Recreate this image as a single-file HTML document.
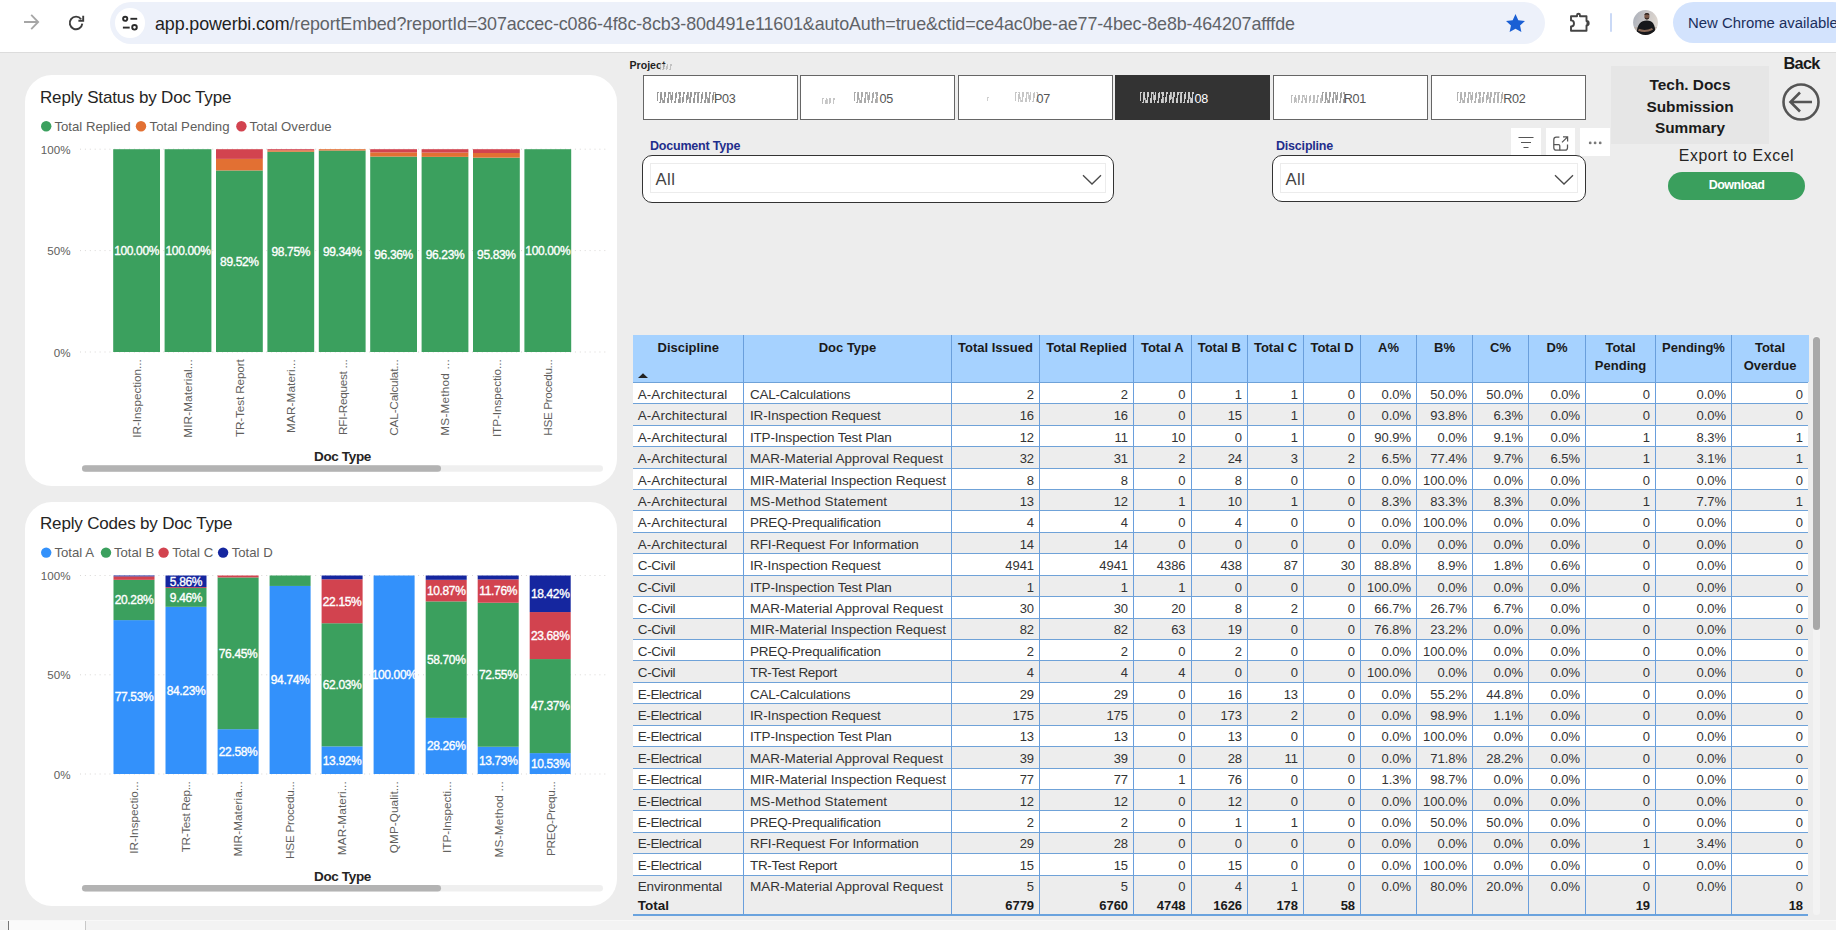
<!DOCTYPE html>
<html lang="en"><head><meta charset="utf-8"><title>Tech. Docs Submission Summary</title>
<style>
*{box-sizing:border-box;margin:0;padding:0}
html,body{width:1836px;height:930px;overflow:hidden}
body{position:relative;background:#ededed;font-family:"Liberation Sans",sans-serif;color:#252423}
.abs{position:absolute}
#toolbar{position:absolute;left:0;top:0;width:1836px;height:53px;background:#fff;border-bottom:1px solid #dcdcdc}
#url{position:absolute;left:109.5px;top:2px;width:1435px;height:42px;border-radius:21px;background:#edf1fa}
#url .site{position:absolute;left:5.5px;top:6px;width:29.6px;height:29.6px;border-radius:50%;background:#fff}
#url .t{position:absolute;left:45.5px;top:9.5px;font-size:17.9px;line-height:24px;color:#5f6368;white-space:nowrap;letter-spacing:-0.12px}
#url .t b{font-weight:400;color:#1f1f1f}
#pill{position:absolute;left:1673px;top:1.5px;width:180px;height:41.5px;border-radius:21px;background:#d3e3fd;color:#1b2f5c;font-size:14.9px;line-height:42px;padding-left:15px;white-space:nowrap}
.card{position:absolute;background:#fff;border-radius:27px}
.ctitle{position:absolute;font-size:17px;letter-spacing:-.17px;color:#252423;white-space:nowrap;line-height:20px}
.pbtn{position:absolute;top:75px;width:155px;height:45px;background:#fff;border:1px solid #666;font-size:12.6px;color:#555;white-space:nowrap}
.pbtn.sel{background:#333;border-color:#333;color:#fff}
.pbtn span{position:absolute;top:13.5px;line-height:18px;letter-spacing:-.3px}
.pbtn i{position:absolute;filter:blur(.7px);background:repeating-linear-gradient(97deg,#444 0 1.6px,transparent 1.6px 3.7px),repeating-linear-gradient(80deg,transparent 0 5px,#666 5px 6.3px,transparent 6.3px 8.9px)}
.pbtn.sel i{background:repeating-linear-gradient(97deg,#fff 0 1.6px,transparent 1.6px 3.7px),repeating-linear-gradient(80deg,transparent 0 5px,#ddd 5px 6.3px,transparent 6.3px 8.9px)}
.slab{position:absolute;font-weight:700;font-size:12.5px;letter-spacing:-.2px;color:#1f2e8c;white-space:nowrap;line-height:16px}
.dd{position:absolute;top:155px;background:#fff;border:1px solid #333;border-radius:10px}
.dd .in{position:absolute;left:7px;right:7px;top:7px;height:30px;border:1px solid #ececec}
.dd .all{position:absolute;left:12.5px;top:13.6px;font-size:16.7px;line-height:20px;color:#444;letter-spacing:.4px}
.ico{position:absolute;top:128px;height:28px;background:#fff}
#tds{position:absolute;left:1611px;top:66px;width:158px;height:78px;background:#e6e6e6;text-align:center;font-weight:700;font-size:15.4px;line-height:21.8px;color:#1a1a1a;padding-top:7.8px}
#back{position:absolute;left:1783.5px;top:53px;font-weight:700;font-size:16.3px;line-height:20px;color:#1a1a1a;letter-spacing:-.7px}
#exp{position:absolute;left:1660px;top:146px;width:153px;text-align:center;font-size:15.8px;line-height:20px;color:#252423;letter-spacing:.61px;white-space:nowrap}
#dl{position:absolute;left:1668px;top:172px;width:137px;height:28px;border-radius:14px;background:#3a9f5d;color:#fff;font-weight:700;font-size:12.5px;letter-spacing:-.5px;line-height:27px;text-align:center}
#bstrip{position:absolute;left:0;top:920px;width:1836px;height:10px;background:#f3f3f3;border-top:1px solid #f8f8f8}
/* table */
#tbl{position:absolute;left:0;top:0}
.hd{position:absolute;top:335px;height:47px;background:#a6d2ff;font-weight:700;font-size:13px;line-height:18px;text-align:center;color:#1a1a1a;padding-top:4px;white-space:nowrap}
.row{position:absolute;left:633px;width:1175px;font-size:13px;color:#333;white-space:nowrap;overflow:visible}
.row.o{background:#fff}
.row span{position:absolute;height:16px;line-height:16px;overflow:visible}
.row span.n{text-align:right}
.hl{position:absolute;left:633px;width:1175px;height:1px;background:#6fa2d8}
.vl{position:absolute;width:1px;background:#6a9fdc}
.s0{letter-spacing:0.076px}.s1{letter-spacing:-0.308px}.s2{letter-spacing:-0.388px}.s3{letter-spacing:-0.141px}.s4{letter-spacing:-0.246px}.s5{letter-spacing:-0.139px}.s6{letter-spacing:-0.190px}.s7{letter-spacing:0.006px}.s8{letter-spacing:-0.023px}.s9{letter-spacing:0.108px}.s10{letter-spacing:-0.203px}.s11{letter-spacing:-0.116px}.s12{letter-spacing:-0.325px}.row span{font-size:13.5px}.row span.n{font-size:13px}</style></head>
<body>
<div id="toolbar">
<svg class="abs" style="left:22px;top:12.2px" width="20" height="20" viewBox="0 0 20 20"><path d="M2 10H15.8M9.2 2.9L16.2 10L9.2 17.1" fill="none" stroke="#a6a6a6" stroke-width="1.8"/></svg>
<svg class="abs" style="left:66px;top:12.5px" width="20" height="20" viewBox="0 0 20 20"><g fill="none" stroke="#3c3c3c" stroke-width="1.9"><path d="M15.1 6.2A6.3 6.3 0 1 0 16.3 10.7"/><path d="M17.2 2.8V7.7H12.4"/></g></svg>
<div id="url"><div class="site"></div>
<svg class="abs" style="left:10.5px;top:12px" width="20" height="18" viewBox="0 0 20 18"><g fill="none" stroke="#2b2b2b" stroke-width="1.9"><circle cx="5.2" cy="4.8" r="2.1"/><path d="M10.4 4.8H17.2"/><circle cx="14.5" cy="13.3" r="2.3"/><path d="M2.9 13.6H9.7"/></g></svg>
<div class="t"><b>app.powerbi.com</b>/reportEmbed?reportId=307accec-c086-4f8c-8cb3-80d491e11601&amp;autoAuth=true&amp;ctid=ce4ac0be-ae77-4bec-8e8b-464207afffde</div>
<svg class="abs" style="left:1394.3px;top:9.8px" width="23" height="23" viewBox="0 0 24 24"><path d="M12 2.2l2.95 6.35 6.95.8-5.15 4.75 1.4 6.85L12 17.5l-6.15 3.45 1.4-6.85L2.1 9.35l6.95-.8z" fill="#1a5fd4"/></svg>
</div>
<svg class="abs" style="left:1567px;top:11px" width="24" height="24" viewBox="0 0 24 24"><path d="M4 5.3H10V4.2A1.5 1.5 0 0 1 13 4.2V5.3H19.5V10A2.2 2.2 0 0 1 19.5 14.4V19.8H4V15.4A3 3 0 0 0 4 9.4Z" fill="none" stroke="#444" stroke-width="1.9" stroke-linejoin="round"/><path d="M19.5 10A2.2 2.2 0 0 1 19.5 14.4Z" fill="#444"/></svg>
<div class="abs" style="left:1610.4px;top:13px;width:2px;height:19px;background:#cad9f6;border-radius:1px"></div>
<svg class="abs" style="left:1633px;top:9.9px" width="25" height="25" viewBox="0 0 25 25"><defs><clipPath id="av"><circle cx="12.5" cy="12.5" r="12.4"/></clipPath><linearGradient id="avg" x1="0" y1="0" x2="1" y2="0.3"><stop offset="0" stop-color="#a9afba"/><stop offset="0.55" stop-color="#c9c6c6"/><stop offset="1" stop-color="#ddd6cf"/></linearGradient></defs><g clip-path="url(#av)"><rect width="25" height="25" fill="url(#avg)"/><path d="M0 17H25V25H0Z" fill="#b8a99c" opacity=".7"/><path d="M3.5 26C3.5 14.5 7.5 10.6 13.8 10.6S22.5 14.5 22.5 26Z" fill="#17181b"/><ellipse cx="13.9" cy="6.2" rx="2.5" ry="3.2" fill="#7a5747"/><path d="M11.4 5.2C11.4 2.4 16.4 2.4 16.4 5.2C15.4 4.2 12.4 4.2 11.4 5.2Z" fill="#2a211d"/><path d="M11.6 7.2C12 10.2 15.8 10.2 16.2 7.2C15 8.6 12.8 8.6 11.6 7.2Z" fill="#2f2622"/><path d="M5.5 19.8Q12.5 22.6 19.5 18.8" stroke="#8b6a58" stroke-width="2.1" fill="none"/></g></svg>
<div id="pill">New Chrome available</div>
</div>
<div class="card" style="left:25px;top:75px;width:592px;height:410.5px"></div>
<div class="card" style="left:25px;top:502px;width:592px;height:404px"></div>
<div class="abs" style="left:629.5px;top:58.2px;font-weight:700;font-size:10.6px;line-height:14px;color:#222;white-space:nowrap">Project<span style="display:inline-block;width:13px;height:6px;margin-left:-5px;vertical-align:-1px;background:repeating-linear-gradient(100deg,#bbb 0 1.5px,#eee 1.5px 3.4px);filter:blur(.7px);opacity:.85"></span></div>
<div class="ico" style="left:1511px;width:30px"><svg width="30" height="28" viewBox="0 0 30 28"><path d="M7.5 9.5H22.5M10 14.5H20M12.5 19.5H17.5" stroke="#555" stroke-width="1.2" fill="none"/></svg></div>
<div class="ico" style="left:1546px;width:29px"><svg width="29" height="28" viewBox="0 0 29 28"><g fill="none" stroke="#555" stroke-width="1.25"><path d="M13.4 9.2H10.3A2.5 2.5 0 0 0 7.8 11.7V19.7A2.5 2.5 0 0 0 10.3 22.2H19A2.5 2.5 0 0 0 21.5 19.7V16.5"/><path d="M17 8.9H21.6V13.4M21.6 8.9L16 14.4"/><path d="M7.8 16.5H12.6A1.2 1.2 0 0 1 13.8 17.7V22.2"/></g></svg></div>
<div class="ico" style="left:1580px;width:30px"><svg width="30" height="28" viewBox="0 0 30 28"><g fill="#7a7a7a"><circle cx="10.2" cy="14.9" r="1.4"/><circle cx="15.1" cy="14.9" r="1.4"/><circle cx="20.2" cy="14.9" r="1.4"/></g></svg></div>
<div class="pbtn" style="left:643px"><i style="left:13.0px;top:16px;width:59px;height:11px;opacity:0.55"></i><span style="right:61.6px">P03</span></div>
<div class="pbtn" style="left:800px"><i style="left:21.0px;top:22px;width:13px;height:6px;opacity:0.3"></i><i style="left:53.0px;top:16px;width:25px;height:11px;opacity:0.45"></i><span style="right:61.0px">05</span></div>
<div class="pbtn" style="left:958px"><i style="left:28.0px;top:21px;width:2px;height:4px;opacity:0.25"></i><i style="left:56.0px;top:16px;width:23px;height:10px;opacity:0.3"></i><span style="right:62.0px">07</span></div>
<div class="pbtn sel" style="left:1115px"><i style="left:24.0px;top:16px;width:54px;height:11px;opacity:0.75"></i><span style="right:61.0px">08</span></div>
<div class="pbtn" style="left:1273px"><i style="left:17.0px;top:19px;width:31px;height:8px;opacity:0.35"></i><i style="left:48.0px;top:16px;width:23px;height:11px;opacity:0.5"></i><span style="right:61.0px">R01</span></div>
<div class="pbtn" style="left:1430.5px"><i style="left:25.5px;top:16px;width:47px;height:11px;opacity:0.4"></i><span style="right:59.1px">R02</span></div>
<div class="slab" style="left:650px;top:138px">Document Type</div>
<div class="slab" style="left:1276px;top:138px">Discipline</div>
<div class="dd" style="left:642px;width:472px;height:48px"><div class="in"></div><div class="all">All</div><svg class="abs" style="right:11px;top:18px" width="20" height="12" viewBox="0 0 20 12"><path d="M1 1.2L10 10L19 1.2" fill="none" stroke="#4a4a4a" stroke-width="1.3"/></svg></div>
<div class="dd" style="left:1272px;width:314px;height:46.5px"><div class="in"></div><div class="all">All</div><svg class="abs" style="right:11px;top:18px" width="20" height="12" viewBox="0 0 20 12"><path d="M1 1.2L10 10L19 1.2" fill="none" stroke="#4a4a4a" stroke-width="1.3"/></svg></div>
<div id="tds">Tech. Docs<br>Submission<br>Summary</div>
<div id="back">Back</div>
<svg class="abs" style="left:1781px;top:82px" width="40" height="40" viewBox="0 0 40 40"><g fill="none" stroke="#555" stroke-width="2.6"><circle cx="20" cy="20" r="17.5"/><path d="M31 20H10M19 10.5L9.5 20L19 29.5" stroke-linejoin="miter"/></g></svg>
<div id="exp">Export to Excel</div>
<div id="dl">Download</div>
<div class="ctitle" style="left:40px;top:88px">Reply Status by Doc Type</div><svg class="abs" style="left:0;top:0" width="630" height="930" viewBox="0 0 630 930" font-family="Liberation Sans, sans-serif"><circle cx="46.2" cy="126.3" r="5.2" fill="#3ba05e"/><text x="54.4" y="130.8" font-size="13.2" fill="#605e5c">Total Replied</text><circle cx="141" cy="126.3" r="5.2" fill="#e27033"/><text x="149.6" y="130.8" font-size="13.2" fill="#605e5c">Total Pending</text><circle cx="241.4" cy="126.3" r="5.2" fill="#d2434f"/><text x="249.6" y="130.8" font-size="13.2" fill="#605e5c">Total Overdue</text><line x1="80" x2="607" y1="149.2" y2="149.2" stroke="#d9d7d5" stroke-width="1" stroke-dasharray="1 3.9"/><text x="70.5" y="153.8" font-size="11.6" fill="#605e5c" text-anchor="end">100%</text><line x1="80" x2="607" y1="250.6" y2="250.6" stroke="#d9d7d5" stroke-width="1" stroke-dasharray="1 3.9"/><text x="70.5" y="255.2" font-size="11.6" fill="#605e5c" text-anchor="end">50%</text><line x1="80" x2="607" y1="352.0" y2="352.0" stroke="#d9d7d5" stroke-width="1" stroke-dasharray="1 3.9"/><text x="70.5" y="356.6" font-size="11.6" fill="#605e5c" text-anchor="end">0%</text><rect x="113.2" y="149.20" width="46.8" height="202.80" fill="#3ba05e"/><text x="136.6" y="254.9" font-size="12" fill="#fff" text-anchor="middle" letter-spacing="-0.35" stroke="#fff" stroke-width="0.35">100.00%</text><rect x="164.6" y="149.20" width="46.8" height="202.80" fill="#3ba05e"/><text x="188.0" y="254.9" font-size="12" fill="#fff" text-anchor="middle" letter-spacing="-0.35" stroke="#fff" stroke-width="0.35">100.00%</text><rect x="216.0" y="170.45" width="46.8" height="181.55" fill="#3ba05e"/><text x="239.4" y="265.5" font-size="12" fill="#fff" text-anchor="middle" letter-spacing="-0.35" stroke="#fff" stroke-width="0.35">89.52%</text><rect x="216.0" y="158.89" width="46.8" height="11.56" fill="#e27033"/><rect x="216.0" y="149.20" width="46.8" height="9.69" fill="#d2434f"/><rect x="267.4" y="151.74" width="46.8" height="200.26" fill="#3ba05e"/><text x="290.8" y="256.2" font-size="12" fill="#fff" text-anchor="middle" letter-spacing="-0.35" stroke="#fff" stroke-width="0.35">98.75%</text><rect x="267.4" y="150.32" width="46.8" height="1.42" fill="#e27033"/><rect x="267.4" y="149.20" width="46.8" height="1.12" fill="#d2434f"/><rect x="318.8" y="150.54" width="46.8" height="201.46" fill="#3ba05e"/><text x="342.2" y="255.6" font-size="12" fill="#fff" text-anchor="middle" letter-spacing="-0.35" stroke="#fff" stroke-width="0.35">99.34%</text><rect x="318.8" y="149.20" width="46.8" height="1.34" fill="#e27033"/><rect x="370.2" y="156.58" width="46.8" height="195.42" fill="#3ba05e"/><text x="393.6" y="258.6" font-size="12" fill="#fff" text-anchor="middle" letter-spacing="-0.35" stroke="#fff" stroke-width="0.35">96.36%</text><rect x="370.2" y="152.32" width="46.8" height="4.26" fill="#e27033"/><rect x="370.2" y="149.20" width="46.8" height="3.12" fill="#d2434f"/><rect x="421.6" y="156.85" width="46.8" height="195.15" fill="#3ba05e"/><text x="445.0" y="258.7" font-size="12" fill="#fff" text-anchor="middle" letter-spacing="-0.35" stroke="#fff" stroke-width="0.35">96.23%</text><rect x="421.6" y="152.59" width="46.8" height="4.26" fill="#e27033"/><rect x="421.6" y="149.20" width="46.8" height="3.39" fill="#d2434f"/><rect x="473.0" y="157.66" width="46.8" height="194.34" fill="#3ba05e"/><text x="496.4" y="259.1" font-size="12" fill="#fff" text-anchor="middle" letter-spacing="-0.35" stroke="#fff" stroke-width="0.35">95.83%</text><rect x="473.0" y="152.99" width="46.8" height="4.66" fill="#e27033"/><rect x="473.0" y="149.20" width="46.8" height="3.79" fill="#d2434f"/><rect x="524.4" y="149.20" width="46.8" height="202.80" fill="#3ba05e"/><text x="547.8" y="254.9" font-size="12" fill="#fff" text-anchor="middle" letter-spacing="-0.35" stroke="#fff" stroke-width="0.35">100.00%</text><text transform="translate(140.9,359.3) rotate(-90)" font-size="11.8" fill="#605e5c" text-anchor="end" letter-spacing="-0.063" dx="-0.063">IR-Inspection...</text><text transform="translate(192.3,359.3) rotate(-90)" font-size="11.8" fill="#605e5c" text-anchor="end" letter-spacing="0.075" dx="0.075">MIR-Material...</text><text transform="translate(243.7,359.3) rotate(-90)" font-size="11.8" fill="#605e5c" text-anchor="end" letter-spacing="-0.168" dx="-0.168">TR-Test Report</text><text transform="translate(295.1,359.3) rotate(-90)" font-size="11.8" fill="#605e5c" text-anchor="end" letter-spacing="0.070" dx="0.070">MAR-Materi...</text><text transform="translate(346.5,359.3) rotate(-90)" font-size="11.8" fill="#605e5c" text-anchor="end" letter-spacing="-0.313" dx="-0.313">RFI-Request ...</text><text transform="translate(397.9,359.3) rotate(-90)" font-size="11.8" fill="#605e5c" text-anchor="end" letter-spacing="-0.210" dx="-0.210">CAL-Calculat...</text><text transform="translate(449.3,359.3) rotate(-90)" font-size="11.8" fill="#605e5c" text-anchor="end" letter-spacing="0.192" dx="0.192">MS-Method ...</text><text transform="translate(500.7,359.3) rotate(-90)" font-size="11.8" fill="#605e5c" text-anchor="end" letter-spacing="-0.103" dx="-0.103">ITP-Inspectio...</text><text transform="translate(552.1,359.3) rotate(-90)" font-size="11.8" fill="#605e5c" text-anchor="end" letter-spacing="-0.378" dx="-0.378">HSE Procedu...</text><text x="342.5" y="460.7" font-size="13.5" font-weight="700" fill="#252423" text-anchor="middle" letter-spacing="-0.35">Doc Type</text><rect x="82" y="465.2" width="521" height="6.6" rx="3.3" fill="#efefef"/><rect x="82" y="465.2" width="359" height="6.6" rx="3.3" fill="#b3b3b3"/></svg>
<div class="ctitle" style="left:40px;top:514px">Reply Codes by Doc Type</div><svg class="abs" style="left:0;top:0" width="630" height="930" viewBox="0 0 630 930" font-family="Liberation Sans, sans-serif"><circle cx="46.2" cy="552.6" r="5.2" fill="#3391fb"/><text x="54.4" y="557.1" font-size="13.2" fill="#605e5c">Total A</text><circle cx="106" cy="552.6" r="5.2" fill="#3ba05e"/><text x="113.9" y="557.1" font-size="13.2" fill="#605e5c">Total B</text><circle cx="163.6" cy="552.6" r="5.2" fill="#d2434f"/><text x="172.2" y="557.1" font-size="13.2" fill="#605e5c">Total C</text><circle cx="223.1" cy="552.6" r="5.2" fill="#15269f"/><text x="231.7" y="557.1" font-size="13.2" fill="#605e5c">Total D</text><line x1="80" x2="607" y1="575.5" y2="575.5" stroke="#d9d7d5" stroke-width="1" stroke-dasharray="1 3.9"/><text x="70.5" y="580.1" font-size="11.6" fill="#605e5c" text-anchor="end">100%</text><line x1="80" x2="607" y1="674.8" y2="674.8" stroke="#d9d7d5" stroke-width="1" stroke-dasharray="1 3.9"/><text x="70.5" y="679.4" font-size="11.6" fill="#605e5c" text-anchor="end">50%</text><line x1="80" x2="607" y1="774.0" y2="774.0" stroke="#d9d7d5" stroke-width="1" stroke-dasharray="1 3.9"/><text x="70.5" y="778.6" font-size="11.6" fill="#605e5c" text-anchor="end">0%</text><rect x="113.5" y="620.10" width="41" height="153.90" fill="#3391fb"/><text x="134.0" y="701.4" font-size="12" fill="#fff" text-anchor="middle" letter-spacing="-0.35" stroke="#fff" stroke-width="0.35">77.53%</text><rect x="113.5" y="579.85" width="41" height="40.26" fill="#3ba05e"/><text x="134.0" y="604.3" font-size="12" fill="#fff" text-anchor="middle" letter-spacing="-0.35" stroke="#fff" stroke-width="0.35">20.28%</text><rect x="113.5" y="576.37" width="41" height="3.47" fill="#d2434f"/><rect x="113.5" y="575.50" width="41" height="0.87" fill="#15269f"/><rect x="165.5" y="606.80" width="41" height="167.20" fill="#3391fb"/><text x="186.0" y="694.7" font-size="12" fill="#fff" text-anchor="middle" letter-spacing="-0.35" stroke="#fff" stroke-width="0.35">84.23%</text><rect x="165.5" y="588.03" width="41" height="18.78" fill="#3ba05e"/><text x="186.0" y="601.7" font-size="12" fill="#fff" text-anchor="middle" letter-spacing="-0.35" stroke="#fff" stroke-width="0.35">9.46%</text><rect x="165.5" y="587.13" width="41" height="0.89" fill="#d2434f"/><rect x="165.5" y="575.50" width="41" height="11.63" fill="#15269f"/><text x="186.0" y="585.6" font-size="12" fill="#fff" text-anchor="middle" letter-spacing="-0.35" stroke="#fff" stroke-width="0.35">5.86%</text><rect x="217.6" y="729.18" width="41" height="44.82" fill="#3391fb"/><text x="238.1" y="755.9" font-size="12" fill="#fff" text-anchor="middle" letter-spacing="-0.35" stroke="#fff" stroke-width="0.35">22.58%</text><rect x="217.6" y="577.43" width="41" height="151.75" fill="#3ba05e"/><text x="238.1" y="657.6" font-size="12" fill="#fff" text-anchor="middle" letter-spacing="-0.35" stroke="#fff" stroke-width="0.35">76.45%</text><rect x="217.6" y="575.50" width="41" height="1.93" fill="#d2434f"/><rect x="269.6" y="585.94" width="41" height="188.06" fill="#3391fb"/><text x="290.1" y="684.3" font-size="12" fill="#fff" text-anchor="middle" letter-spacing="-0.35" stroke="#fff" stroke-width="0.35">94.74%</text><rect x="269.6" y="575.50" width="41" height="10.44" fill="#3ba05e"/><rect x="321.6" y="746.37" width="41" height="27.63" fill="#3391fb"/><text x="342.1" y="764.5" font-size="12" fill="#fff" text-anchor="middle" letter-spacing="-0.35" stroke="#fff" stroke-width="0.35">13.92%</text><rect x="321.6" y="623.24" width="41" height="123.13" fill="#3ba05e"/><text x="342.1" y="689.1" font-size="12" fill="#fff" text-anchor="middle" letter-spacing="-0.35" stroke="#fff" stroke-width="0.35">62.03%</text><rect x="321.6" y="579.27" width="41" height="43.97" fill="#d2434f"/><text x="342.1" y="605.6" font-size="12" fill="#fff" text-anchor="middle" letter-spacing="-0.35" stroke="#fff" stroke-width="0.35">22.15%</text><rect x="321.6" y="575.50" width="41" height="3.77" fill="#15269f"/><rect x="373.6" y="575.50" width="41" height="198.50" fill="#3391fb"/><text x="394.1" y="679.0" font-size="12" fill="#fff" text-anchor="middle" letter-spacing="-0.35" stroke="#fff" stroke-width="0.35">100.00%</text><rect x="425.7" y="717.90" width="41" height="56.10" fill="#3391fb"/><text x="446.2" y="750.3" font-size="12" fill="#fff" text-anchor="middle" letter-spacing="-0.35" stroke="#fff" stroke-width="0.35">28.26%</text><rect x="425.7" y="601.38" width="41" height="116.52" fill="#3ba05e"/><text x="446.2" y="663.9" font-size="12" fill="#fff" text-anchor="middle" letter-spacing="-0.35" stroke="#fff" stroke-width="0.35">58.70%</text><rect x="425.7" y="579.81" width="41" height="21.58" fill="#d2434f"/><text x="446.2" y="594.9" font-size="12" fill="#fff" text-anchor="middle" letter-spacing="-0.35" stroke="#fff" stroke-width="0.35">10.87%</text><rect x="425.7" y="575.50" width="41" height="4.31" fill="#15269f"/><rect x="477.7" y="746.75" width="41" height="27.25" fill="#3391fb"/><text x="498.2" y="764.7" font-size="12" fill="#fff" text-anchor="middle" letter-spacing="-0.35" stroke="#fff" stroke-width="0.35">13.73%</text><rect x="477.7" y="602.73" width="41" height="144.01" fill="#3ba05e"/><text x="498.2" y="679.0" font-size="12" fill="#fff" text-anchor="middle" letter-spacing="-0.35" stroke="#fff" stroke-width="0.35">72.55%</text><rect x="477.7" y="579.39" width="41" height="23.34" fill="#d2434f"/><text x="498.2" y="595.4" font-size="12" fill="#fff" text-anchor="middle" letter-spacing="-0.35" stroke="#fff" stroke-width="0.35">11.76%</text><rect x="477.7" y="575.50" width="41" height="3.89" fill="#15269f"/><rect x="529.7" y="753.10" width="41" height="20.90" fill="#3391fb"/><text x="550.2" y="767.8" font-size="12" fill="#fff" text-anchor="middle" letter-spacing="-0.35" stroke="#fff" stroke-width="0.35">10.53%</text><rect x="529.7" y="659.07" width="41" height="94.03" fill="#3ba05e"/><text x="550.2" y="710.4" font-size="12" fill="#fff" text-anchor="middle" letter-spacing="-0.35" stroke="#fff" stroke-width="0.35">47.37%</text><rect x="529.7" y="612.06" width="41" height="47.00" fill="#d2434f"/><text x="550.2" y="639.9" font-size="12" fill="#fff" text-anchor="middle" letter-spacing="-0.35" stroke="#fff" stroke-width="0.35">23.68%</text><rect x="529.7" y="575.50" width="41" height="36.56" fill="#15269f"/><text x="550.2" y="598.1" font-size="12" fill="#fff" text-anchor="middle" letter-spacing="-0.35" stroke="#fff" stroke-width="0.35">18.42%</text><text transform="translate(138.3,781.3) rotate(-90)" font-size="11.8" fill="#605e5c" text-anchor="end" letter-spacing="-0.020" dx="-0.020">IR-Inspectio...</text><text transform="translate(190.3,781.3) rotate(-90)" font-size="11.8" fill="#605e5c" text-anchor="end" letter-spacing="-0.388" dx="-0.388">TR-Test Rep...</text><text transform="translate(242.4,781.3) rotate(-90)" font-size="11.8" fill="#605e5c" text-anchor="end" letter-spacing="0.044" dx="0.044">MIR-Materia...</text><text transform="translate(294.4,781.3) rotate(-90)" font-size="11.8" fill="#605e5c" text-anchor="end" letter-spacing="-0.286" dx="-0.286">HSE Procedu...</text><text transform="translate(346.4,781.3) rotate(-90)" font-size="11.8" fill="#605e5c" text-anchor="end" letter-spacing="0.095" dx="0.095">MAR-Materi...</text><text transform="translate(398.4,781.3) rotate(-90)" font-size="11.8" fill="#605e5c" text-anchor="end" letter-spacing="0.037" dx="0.037">QMP-Qualit...</text><text transform="translate(450.5,781.3) rotate(-90)" font-size="11.8" fill="#605e5c" text-anchor="end" letter-spacing="-0.084" dx="-0.084">ITP-Inspecti...</text><text transform="translate(502.5,781.3) rotate(-90)" font-size="11.8" fill="#605e5c" text-anchor="end" letter-spacing="0.167" dx="0.167">MS-Method ...</text><text transform="translate(554.5,781.3) rotate(-90)" font-size="11.8" fill="#605e5c" text-anchor="end" letter-spacing="-0.332" dx="-0.332">PREQ-Prequ...</text><text x="342.5" y="880.5" font-size="13.5" font-weight="700" fill="#252423" text-anchor="middle" letter-spacing="-0.35">Doc Type</text><rect x="82" y="885" width="521" height="6.6" rx="3.3" fill="#efefef"/><rect x="82" y="885" width="359" height="6.6" rx="3.3" fill="#b3b3b3"/></svg>
<div class="hd" style="left:633px;width:110.5px">Discipline</div>
<div class="hd" style="left:743.5px;width:208px">Doc Type</div>
<div class="hd" style="left:951.5px;width:88px">Total Issued</div>
<div class="hd" style="left:1039.5px;width:94px">Total Replied</div>
<div class="hd" style="left:1133.5px;width:57.5px">Total A</div>
<div class="hd" style="left:1191px;width:56.5px">Total B</div>
<div class="hd" style="left:1247.5px;width:56px">Total C</div>
<div class="hd" style="left:1303.5px;width:57px">Total D</div>
<div class="hd" style="left:1360.5px;width:56px">A%</div>
<div class="hd" style="left:1416.5px;width:56px">B%</div>
<div class="hd" style="left:1472.5px;width:56px">C%</div>
<div class="hd" style="left:1528.5px;width:57px">D%</div>
<div class="hd" style="left:1585.5px;width:70px">Total<br>Pending</div>
<div class="hd" style="left:1655.5px;width:76px">Pending%</div>
<div class="hd" style="left:1731.5px;width:77px">Total<br>Overdue</div>
<svg class="abs" style="left:637.5px;top:372.8px" width="10" height="5" viewBox="0 0 10 5"><path d="M0 5L5 0.3L10 5Z" fill="#222"/></svg>
<div class="row o" style="top:382px;height:21px"><span class="s0" style="left:4.7px;top:4.84px;width:105.5px">A-Architectural</span><span class="s4" style="left:117px;top:4.84px;width:203px">CAL-Calculations</span><span class="n" style="left:318.5px;top:5.00px;width:82.6px">2</span><span class="n" style="left:406.5px;top:5.00px;width:88.6px">2</span><span class="n" style="left:500.5px;top:5.00px;width:52.1px">0</span><span class="n" style="left:558px;top:5.00px;width:51.1px">1</span><span class="n" style="left:614.5px;top:5.00px;width:50.6px">1</span><span class="n" style="left:670.5px;top:5.00px;width:51.6px">0</span><span class="n" style="left:727.5px;top:5.00px;width:50.6px">0.0%</span><span class="n" style="left:783.5px;top:5.00px;width:50.6px">50.0%</span><span class="n" style="left:839.5px;top:5.00px;width:50.6px">50.0%</span><span class="n" style="left:895.5px;top:5.00px;width:51.6px">0.0%</span><span class="n" style="left:952.5px;top:5.00px;width:64.6px">0</span><span class="n" style="left:1022.5px;top:5.00px;width:70.6px">0.0%</span><span class="n" style="left:1098.5px;top:5.00px;width:71.6px">0</span></div>
<div class="row" style="top:403px;height:22px"><span class="s0" style="left:4.7px;top:4.84px;width:105.5px">A-Architectural</span><span class="s5" style="left:117px;top:4.84px;width:203px">IR-Inspection Request</span><span class="n" style="left:318.5px;top:5.00px;width:82.6px">16</span><span class="n" style="left:406.5px;top:5.00px;width:88.6px">16</span><span class="n" style="left:500.5px;top:5.00px;width:52.1px">0</span><span class="n" style="left:558px;top:5.00px;width:51.1px">15</span><span class="n" style="left:614.5px;top:5.00px;width:50.6px">1</span><span class="n" style="left:670.5px;top:5.00px;width:51.6px">0</span><span class="n" style="left:727.5px;top:5.00px;width:50.6px">0.0%</span><span class="n" style="left:783.5px;top:5.00px;width:50.6px">93.8%</span><span class="n" style="left:839.5px;top:5.00px;width:50.6px">6.3%</span><span class="n" style="left:895.5px;top:5.00px;width:51.6px">0.0%</span><span class="n" style="left:952.5px;top:5.00px;width:64.6px">0</span><span class="n" style="left:1022.5px;top:5.00px;width:70.6px">0.0%</span><span class="n" style="left:1098.5px;top:5.00px;width:71.6px">0</span></div>
<div class="row o" style="top:425px;height:21px"><span class="s0" style="left:4.7px;top:4.84px;width:105.5px">A-Architectural</span><span class="s6" style="left:117px;top:4.84px;width:203px">ITP-Inspection Test Plan</span><span class="n" style="left:318.5px;top:5.00px;width:82.6px">12</span><span class="n" style="left:406.5px;top:5.00px;width:88.6px">11</span><span class="n" style="left:500.5px;top:5.00px;width:52.1px">10</span><span class="n" style="left:558px;top:5.00px;width:51.1px">0</span><span class="n" style="left:614.5px;top:5.00px;width:50.6px">1</span><span class="n" style="left:670.5px;top:5.00px;width:51.6px">0</span><span class="n" style="left:727.5px;top:5.00px;width:50.6px">90.9%</span><span class="n" style="left:783.5px;top:5.00px;width:50.6px">0.0%</span><span class="n" style="left:839.5px;top:5.00px;width:50.6px">9.1%</span><span class="n" style="left:895.5px;top:5.00px;width:51.6px">0.0%</span><span class="n" style="left:952.5px;top:5.00px;width:64.6px">1</span><span class="n" style="left:1022.5px;top:5.00px;width:70.6px">8.3%</span><span class="n" style="left:1098.5px;top:5.00px;width:71.6px">1</span></div>
<div class="row" style="top:446px;height:22px"><span class="s0" style="left:4.7px;top:4.84px;width:105.5px">A-Architectural</span><span class="s7" style="left:117px;top:4.84px;width:203px">MAR-Material Approval Request</span><span class="n" style="left:318.5px;top:5.00px;width:82.6px">32</span><span class="n" style="left:406.5px;top:5.00px;width:88.6px">31</span><span class="n" style="left:500.5px;top:5.00px;width:52.1px">2</span><span class="n" style="left:558px;top:5.00px;width:51.1px">24</span><span class="n" style="left:614.5px;top:5.00px;width:50.6px">3</span><span class="n" style="left:670.5px;top:5.00px;width:51.6px">2</span><span class="n" style="left:727.5px;top:5.00px;width:50.6px">6.5%</span><span class="n" style="left:783.5px;top:5.00px;width:50.6px">77.4%</span><span class="n" style="left:839.5px;top:5.00px;width:50.6px">9.7%</span><span class="n" style="left:895.5px;top:5.00px;width:51.6px">6.5%</span><span class="n" style="left:952.5px;top:5.00px;width:64.6px">1</span><span class="n" style="left:1022.5px;top:5.00px;width:70.6px">3.1%</span><span class="n" style="left:1098.5px;top:5.00px;width:71.6px">1</span></div>
<div class="row o" style="top:468px;height:21px"><span class="s0" style="left:4.7px;top:4.84px;width:105.5px">A-Architectural</span><span class="s8" style="left:117px;top:4.84px;width:203px">MIR-Material Inspection Request</span><span class="n" style="left:318.5px;top:5.00px;width:82.6px">8</span><span class="n" style="left:406.5px;top:5.00px;width:88.6px">8</span><span class="n" style="left:500.5px;top:5.00px;width:52.1px">0</span><span class="n" style="left:558px;top:5.00px;width:51.1px">8</span><span class="n" style="left:614.5px;top:5.00px;width:50.6px">0</span><span class="n" style="left:670.5px;top:5.00px;width:51.6px">0</span><span class="n" style="left:727.5px;top:5.00px;width:50.6px">0.0%</span><span class="n" style="left:783.5px;top:5.00px;width:50.6px">100.0%</span><span class="n" style="left:839.5px;top:5.00px;width:50.6px">0.0%</span><span class="n" style="left:895.5px;top:5.00px;width:51.6px">0.0%</span><span class="n" style="left:952.5px;top:5.00px;width:64.6px">0</span><span class="n" style="left:1022.5px;top:5.00px;width:70.6px">0.0%</span><span class="n" style="left:1098.5px;top:5.00px;width:71.6px">0</span></div>
<div class="row" style="top:489px;height:21px"><span class="s0" style="left:4.7px;top:4.84px;width:105.5px">A-Architectural</span><span class="s9" style="left:117px;top:4.84px;width:203px">MS-Method Statement</span><span class="n" style="left:318.5px;top:5.00px;width:82.6px">13</span><span class="n" style="left:406.5px;top:5.00px;width:88.6px">12</span><span class="n" style="left:500.5px;top:5.00px;width:52.1px">1</span><span class="n" style="left:558px;top:5.00px;width:51.1px">10</span><span class="n" style="left:614.5px;top:5.00px;width:50.6px">1</span><span class="n" style="left:670.5px;top:5.00px;width:51.6px">0</span><span class="n" style="left:727.5px;top:5.00px;width:50.6px">8.3%</span><span class="n" style="left:783.5px;top:5.00px;width:50.6px">83.3%</span><span class="n" style="left:839.5px;top:5.00px;width:50.6px">8.3%</span><span class="n" style="left:895.5px;top:5.00px;width:51.6px">0.0%</span><span class="n" style="left:952.5px;top:5.00px;width:64.6px">1</span><span class="n" style="left:1022.5px;top:5.00px;width:70.6px">7.7%</span><span class="n" style="left:1098.5px;top:5.00px;width:71.6px">1</span></div>
<div class="row o" style="top:510px;height:22px"><span class="s0" style="left:4.7px;top:4.84px;width:105.5px">A-Architectural</span><span class="s10" style="left:117px;top:4.84px;width:203px">PREQ-Prequalification</span><span class="n" style="left:318.5px;top:5.00px;width:82.6px">4</span><span class="n" style="left:406.5px;top:5.00px;width:88.6px">4</span><span class="n" style="left:500.5px;top:5.00px;width:52.1px">0</span><span class="n" style="left:558px;top:5.00px;width:51.1px">4</span><span class="n" style="left:614.5px;top:5.00px;width:50.6px">0</span><span class="n" style="left:670.5px;top:5.00px;width:51.6px">0</span><span class="n" style="left:727.5px;top:5.00px;width:50.6px">0.0%</span><span class="n" style="left:783.5px;top:5.00px;width:50.6px">100.0%</span><span class="n" style="left:839.5px;top:5.00px;width:50.6px">0.0%</span><span class="n" style="left:895.5px;top:5.00px;width:51.6px">0.0%</span><span class="n" style="left:952.5px;top:5.00px;width:64.6px">0</span><span class="n" style="left:1022.5px;top:5.00px;width:70.6px">0.0%</span><span class="n" style="left:1098.5px;top:5.00px;width:71.6px">0</span></div>
<div class="row" style="top:532px;height:21px"><span class="s0" style="left:4.7px;top:4.84px;width:105.5px">A-Architectural</span><span class="s11" style="left:117px;top:4.84px;width:203px">RFI-Request For Information</span><span class="n" style="left:318.5px;top:5.00px;width:82.6px">14</span><span class="n" style="left:406.5px;top:5.00px;width:88.6px">14</span><span class="n" style="left:500.5px;top:5.00px;width:52.1px">0</span><span class="n" style="left:558px;top:5.00px;width:51.1px">0</span><span class="n" style="left:614.5px;top:5.00px;width:50.6px">0</span><span class="n" style="left:670.5px;top:5.00px;width:51.6px">0</span><span class="n" style="left:727.5px;top:5.00px;width:50.6px">0.0%</span><span class="n" style="left:783.5px;top:5.00px;width:50.6px">0.0%</span><span class="n" style="left:839.5px;top:5.00px;width:50.6px">0.0%</span><span class="n" style="left:895.5px;top:5.00px;width:51.6px">0.0%</span><span class="n" style="left:952.5px;top:5.00px;width:64.6px">0</span><span class="n" style="left:1022.5px;top:5.00px;width:70.6px">0.0%</span><span class="n" style="left:1098.5px;top:5.00px;width:71.6px">0</span></div>
<div class="row o" style="top:553px;height:22px"><span class="s1" style="left:4.7px;top:4.84px;width:105.5px">C-Civil</span><span class="s5" style="left:117px;top:4.84px;width:203px">IR-Inspection Request</span><span class="n" style="left:318.5px;top:5.00px;width:82.6px">4941</span><span class="n" style="left:406.5px;top:5.00px;width:88.6px">4941</span><span class="n" style="left:500.5px;top:5.00px;width:52.1px">4386</span><span class="n" style="left:558px;top:5.00px;width:51.1px">438</span><span class="n" style="left:614.5px;top:5.00px;width:50.6px">87</span><span class="n" style="left:670.5px;top:5.00px;width:51.6px">30</span><span class="n" style="left:727.5px;top:5.00px;width:50.6px">88.8%</span><span class="n" style="left:783.5px;top:5.00px;width:50.6px">8.9%</span><span class="n" style="left:839.5px;top:5.00px;width:50.6px">1.8%</span><span class="n" style="left:895.5px;top:5.00px;width:51.6px">0.6%</span><span class="n" style="left:952.5px;top:5.00px;width:64.6px">0</span><span class="n" style="left:1022.5px;top:5.00px;width:70.6px">0.0%</span><span class="n" style="left:1098.5px;top:5.00px;width:71.6px">0</span></div>
<div class="row" style="top:575px;height:21px"><span class="s1" style="left:4.7px;top:4.84px;width:105.5px">C-Civil</span><span class="s6" style="left:117px;top:4.84px;width:203px">ITP-Inspection Test Plan</span><span class="n" style="left:318.5px;top:5.00px;width:82.6px">1</span><span class="n" style="left:406.5px;top:5.00px;width:88.6px">1</span><span class="n" style="left:500.5px;top:5.00px;width:52.1px">1</span><span class="n" style="left:558px;top:5.00px;width:51.1px">0</span><span class="n" style="left:614.5px;top:5.00px;width:50.6px">0</span><span class="n" style="left:670.5px;top:5.00px;width:51.6px">0</span><span class="n" style="left:727.5px;top:5.00px;width:50.6px">100.0%</span><span class="n" style="left:783.5px;top:5.00px;width:50.6px">0.0%</span><span class="n" style="left:839.5px;top:5.00px;width:50.6px">0.0%</span><span class="n" style="left:895.5px;top:5.00px;width:51.6px">0.0%</span><span class="n" style="left:952.5px;top:5.00px;width:64.6px">0</span><span class="n" style="left:1022.5px;top:5.00px;width:70.6px">0.0%</span><span class="n" style="left:1098.5px;top:5.00px;width:71.6px">0</span></div>
<div class="row o" style="top:596px;height:22px"><span class="s1" style="left:4.7px;top:4.84px;width:105.5px">C-Civil</span><span class="s7" style="left:117px;top:4.84px;width:203px">MAR-Material Approval Request</span><span class="n" style="left:318.5px;top:5.00px;width:82.6px">30</span><span class="n" style="left:406.5px;top:5.00px;width:88.6px">30</span><span class="n" style="left:500.5px;top:5.00px;width:52.1px">20</span><span class="n" style="left:558px;top:5.00px;width:51.1px">8</span><span class="n" style="left:614.5px;top:5.00px;width:50.6px">2</span><span class="n" style="left:670.5px;top:5.00px;width:51.6px">0</span><span class="n" style="left:727.5px;top:5.00px;width:50.6px">66.7%</span><span class="n" style="left:783.5px;top:5.00px;width:50.6px">26.7%</span><span class="n" style="left:839.5px;top:5.00px;width:50.6px">6.7%</span><span class="n" style="left:895.5px;top:5.00px;width:51.6px">0.0%</span><span class="n" style="left:952.5px;top:5.00px;width:64.6px">0</span><span class="n" style="left:1022.5px;top:5.00px;width:70.6px">0.0%</span><span class="n" style="left:1098.5px;top:5.00px;width:71.6px">0</span></div>
<div class="row" style="top:618px;height:21px"><span class="s1" style="left:4.7px;top:3.84px;width:105.5px">C-Civil</span><span class="s8" style="left:117px;top:3.84px;width:203px">MIR-Material Inspection Request</span><span class="n" style="left:318.5px;top:4.00px;width:82.6px">82</span><span class="n" style="left:406.5px;top:4.00px;width:88.6px">82</span><span class="n" style="left:500.5px;top:4.00px;width:52.1px">63</span><span class="n" style="left:558px;top:4.00px;width:51.1px">19</span><span class="n" style="left:614.5px;top:4.00px;width:50.6px">0</span><span class="n" style="left:670.5px;top:4.00px;width:51.6px">0</span><span class="n" style="left:727.5px;top:4.00px;width:50.6px">76.8%</span><span class="n" style="left:783.5px;top:4.00px;width:50.6px">23.2%</span><span class="n" style="left:839.5px;top:4.00px;width:50.6px">0.0%</span><span class="n" style="left:895.5px;top:4.00px;width:51.6px">0.0%</span><span class="n" style="left:952.5px;top:4.00px;width:64.6px">0</span><span class="n" style="left:1022.5px;top:4.00px;width:70.6px">0.0%</span><span class="n" style="left:1098.5px;top:4.00px;width:71.6px">0</span></div>
<div class="row o" style="top:639px;height:21px"><span class="s1" style="left:4.7px;top:4.84px;width:105.5px">C-Civil</span><span class="s10" style="left:117px;top:4.84px;width:203px">PREQ-Prequalification</span><span class="n" style="left:318.5px;top:5.00px;width:82.6px">2</span><span class="n" style="left:406.5px;top:5.00px;width:88.6px">2</span><span class="n" style="left:500.5px;top:5.00px;width:52.1px">0</span><span class="n" style="left:558px;top:5.00px;width:51.1px">2</span><span class="n" style="left:614.5px;top:5.00px;width:50.6px">0</span><span class="n" style="left:670.5px;top:5.00px;width:51.6px">0</span><span class="n" style="left:727.5px;top:5.00px;width:50.6px">0.0%</span><span class="n" style="left:783.5px;top:5.00px;width:50.6px">100.0%</span><span class="n" style="left:839.5px;top:5.00px;width:50.6px">0.0%</span><span class="n" style="left:895.5px;top:5.00px;width:51.6px">0.0%</span><span class="n" style="left:952.5px;top:5.00px;width:64.6px">0</span><span class="n" style="left:1022.5px;top:5.00px;width:70.6px">0.0%</span><span class="n" style="left:1098.5px;top:5.00px;width:71.6px">0</span></div>
<div class="row" style="top:660px;height:22px"><span class="s1" style="left:4.7px;top:4.84px;width:105.5px">C-Civil</span><span class="s12" style="left:117px;top:4.84px;width:203px">TR-Test Report</span><span class="n" style="left:318.5px;top:5.00px;width:82.6px">4</span><span class="n" style="left:406.5px;top:5.00px;width:88.6px">4</span><span class="n" style="left:500.5px;top:5.00px;width:52.1px">4</span><span class="n" style="left:558px;top:5.00px;width:51.1px">0</span><span class="n" style="left:614.5px;top:5.00px;width:50.6px">0</span><span class="n" style="left:670.5px;top:5.00px;width:51.6px">0</span><span class="n" style="left:727.5px;top:5.00px;width:50.6px">100.0%</span><span class="n" style="left:783.5px;top:5.00px;width:50.6px">0.0%</span><span class="n" style="left:839.5px;top:5.00px;width:50.6px">0.0%</span><span class="n" style="left:895.5px;top:5.00px;width:51.6px">0.0%</span><span class="n" style="left:952.5px;top:5.00px;width:64.6px">0</span><span class="n" style="left:1022.5px;top:5.00px;width:70.6px">0.0%</span><span class="n" style="left:1098.5px;top:5.00px;width:71.6px">0</span></div>
<div class="row o" style="top:682px;height:21px"><span class="s2" style="left:4.7px;top:4.84px;width:105.5px">E-Electrical</span><span class="s4" style="left:117px;top:4.84px;width:203px">CAL-Calculations</span><span class="n" style="left:318.5px;top:5.00px;width:82.6px">29</span><span class="n" style="left:406.5px;top:5.00px;width:88.6px">29</span><span class="n" style="left:500.5px;top:5.00px;width:52.1px">0</span><span class="n" style="left:558px;top:5.00px;width:51.1px">16</span><span class="n" style="left:614.5px;top:5.00px;width:50.6px">13</span><span class="n" style="left:670.5px;top:5.00px;width:51.6px">0</span><span class="n" style="left:727.5px;top:5.00px;width:50.6px">0.0%</span><span class="n" style="left:783.5px;top:5.00px;width:50.6px">55.2%</span><span class="n" style="left:839.5px;top:5.00px;width:50.6px">44.8%</span><span class="n" style="left:895.5px;top:5.00px;width:51.6px">0.0%</span><span class="n" style="left:952.5px;top:5.00px;width:64.6px">0</span><span class="n" style="left:1022.5px;top:5.00px;width:70.6px">0.0%</span><span class="n" style="left:1098.5px;top:5.00px;width:71.6px">0</span></div>
<div class="row" style="top:703px;height:22px"><span class="s2" style="left:4.7px;top:4.84px;width:105.5px">E-Electrical</span><span class="s5" style="left:117px;top:4.84px;width:203px">IR-Inspection Request</span><span class="n" style="left:318.5px;top:5.00px;width:82.6px">175</span><span class="n" style="left:406.5px;top:5.00px;width:88.6px">175</span><span class="n" style="left:500.5px;top:5.00px;width:52.1px">0</span><span class="n" style="left:558px;top:5.00px;width:51.1px">173</span><span class="n" style="left:614.5px;top:5.00px;width:50.6px">2</span><span class="n" style="left:670.5px;top:5.00px;width:51.6px">0</span><span class="n" style="left:727.5px;top:5.00px;width:50.6px">0.0%</span><span class="n" style="left:783.5px;top:5.00px;width:50.6px">98.9%</span><span class="n" style="left:839.5px;top:5.00px;width:50.6px">1.1%</span><span class="n" style="left:895.5px;top:5.00px;width:51.6px">0.0%</span><span class="n" style="left:952.5px;top:5.00px;width:64.6px">0</span><span class="n" style="left:1022.5px;top:5.00px;width:70.6px">0.0%</span><span class="n" style="left:1098.5px;top:5.00px;width:71.6px">0</span></div>
<div class="row o" style="top:725px;height:21px"><span class="s2" style="left:4.7px;top:3.84px;width:105.5px">E-Electrical</span><span class="s6" style="left:117px;top:3.84px;width:203px">ITP-Inspection Test Plan</span><span class="n" style="left:318.5px;top:4.00px;width:82.6px">13</span><span class="n" style="left:406.5px;top:4.00px;width:88.6px">13</span><span class="n" style="left:500.5px;top:4.00px;width:52.1px">0</span><span class="n" style="left:558px;top:4.00px;width:51.1px">13</span><span class="n" style="left:614.5px;top:4.00px;width:50.6px">0</span><span class="n" style="left:670.5px;top:4.00px;width:51.6px">0</span><span class="n" style="left:727.5px;top:4.00px;width:50.6px">0.0%</span><span class="n" style="left:783.5px;top:4.00px;width:50.6px">100.0%</span><span class="n" style="left:839.5px;top:4.00px;width:50.6px">0.0%</span><span class="n" style="left:895.5px;top:4.00px;width:51.6px">0.0%</span><span class="n" style="left:952.5px;top:4.00px;width:64.6px">0</span><span class="n" style="left:1022.5px;top:4.00px;width:70.6px">0.0%</span><span class="n" style="left:1098.5px;top:4.00px;width:71.6px">0</span></div>
<div class="row" style="top:746px;height:22px"><span class="s2" style="left:4.7px;top:4.84px;width:105.5px">E-Electrical</span><span class="s7" style="left:117px;top:4.84px;width:203px">MAR-Material Approval Request</span><span class="n" style="left:318.5px;top:5.00px;width:82.6px">39</span><span class="n" style="left:406.5px;top:5.00px;width:88.6px">39</span><span class="n" style="left:500.5px;top:5.00px;width:52.1px">0</span><span class="n" style="left:558px;top:5.00px;width:51.1px">28</span><span class="n" style="left:614.5px;top:5.00px;width:50.6px">11</span><span class="n" style="left:670.5px;top:5.00px;width:51.6px">0</span><span class="n" style="left:727.5px;top:5.00px;width:50.6px">0.0%</span><span class="n" style="left:783.5px;top:5.00px;width:50.6px">71.8%</span><span class="n" style="left:839.5px;top:5.00px;width:50.6px">28.2%</span><span class="n" style="left:895.5px;top:5.00px;width:51.6px">0.0%</span><span class="n" style="left:952.5px;top:5.00px;width:64.6px">0</span><span class="n" style="left:1022.5px;top:5.00px;width:70.6px">0.0%</span><span class="n" style="left:1098.5px;top:5.00px;width:71.6px">0</span></div>
<div class="row o" style="top:768px;height:21px"><span class="s2" style="left:4.7px;top:3.84px;width:105.5px">E-Electrical</span><span class="s8" style="left:117px;top:3.84px;width:203px">MIR-Material Inspection Request</span><span class="n" style="left:318.5px;top:4.00px;width:82.6px">77</span><span class="n" style="left:406.5px;top:4.00px;width:88.6px">77</span><span class="n" style="left:500.5px;top:4.00px;width:52.1px">1</span><span class="n" style="left:558px;top:4.00px;width:51.1px">76</span><span class="n" style="left:614.5px;top:4.00px;width:50.6px">0</span><span class="n" style="left:670.5px;top:4.00px;width:51.6px">0</span><span class="n" style="left:727.5px;top:4.00px;width:50.6px">1.3%</span><span class="n" style="left:783.5px;top:4.00px;width:50.6px">98.7%</span><span class="n" style="left:839.5px;top:4.00px;width:50.6px">0.0%</span><span class="n" style="left:895.5px;top:4.00px;width:51.6px">0.0%</span><span class="n" style="left:952.5px;top:4.00px;width:64.6px">0</span><span class="n" style="left:1022.5px;top:4.00px;width:70.6px">0.0%</span><span class="n" style="left:1098.5px;top:4.00px;width:71.6px">0</span></div>
<div class="row" style="top:789px;height:21px"><span class="s2" style="left:4.7px;top:4.84px;width:105.5px">E-Electrical</span><span class="s9" style="left:117px;top:4.84px;width:203px">MS-Method Statement</span><span class="n" style="left:318.5px;top:5.00px;width:82.6px">12</span><span class="n" style="left:406.5px;top:5.00px;width:88.6px">12</span><span class="n" style="left:500.5px;top:5.00px;width:52.1px">0</span><span class="n" style="left:558px;top:5.00px;width:51.1px">12</span><span class="n" style="left:614.5px;top:5.00px;width:50.6px">0</span><span class="n" style="left:670.5px;top:5.00px;width:51.6px">0</span><span class="n" style="left:727.5px;top:5.00px;width:50.6px">0.0%</span><span class="n" style="left:783.5px;top:5.00px;width:50.6px">100.0%</span><span class="n" style="left:839.5px;top:5.00px;width:50.6px">0.0%</span><span class="n" style="left:895.5px;top:5.00px;width:51.6px">0.0%</span><span class="n" style="left:952.5px;top:5.00px;width:64.6px">0</span><span class="n" style="left:1022.5px;top:5.00px;width:70.6px">0.0%</span><span class="n" style="left:1098.5px;top:5.00px;width:71.6px">0</span></div>
<div class="row o" style="top:810px;height:22px"><span class="s2" style="left:4.7px;top:4.84px;width:105.5px">E-Electrical</span><span class="s10" style="left:117px;top:4.84px;width:203px">PREQ-Prequalification</span><span class="n" style="left:318.5px;top:5.00px;width:82.6px">2</span><span class="n" style="left:406.5px;top:5.00px;width:88.6px">2</span><span class="n" style="left:500.5px;top:5.00px;width:52.1px">0</span><span class="n" style="left:558px;top:5.00px;width:51.1px">1</span><span class="n" style="left:614.5px;top:5.00px;width:50.6px">1</span><span class="n" style="left:670.5px;top:5.00px;width:51.6px">0</span><span class="n" style="left:727.5px;top:5.00px;width:50.6px">0.0%</span><span class="n" style="left:783.5px;top:5.00px;width:50.6px">50.0%</span><span class="n" style="left:839.5px;top:5.00px;width:50.6px">50.0%</span><span class="n" style="left:895.5px;top:5.00px;width:51.6px">0.0%</span><span class="n" style="left:952.5px;top:5.00px;width:64.6px">0</span><span class="n" style="left:1022.5px;top:5.00px;width:70.6px">0.0%</span><span class="n" style="left:1098.5px;top:5.00px;width:71.6px">0</span></div>
<div class="row" style="top:832px;height:21px"><span class="s2" style="left:4.7px;top:3.84px;width:105.5px">E-Electrical</span><span class="s11" style="left:117px;top:3.84px;width:203px">RFI-Request For Information</span><span class="n" style="left:318.5px;top:4.00px;width:82.6px">29</span><span class="n" style="left:406.5px;top:4.00px;width:88.6px">28</span><span class="n" style="left:500.5px;top:4.00px;width:52.1px">0</span><span class="n" style="left:558px;top:4.00px;width:51.1px">0</span><span class="n" style="left:614.5px;top:4.00px;width:50.6px">0</span><span class="n" style="left:670.5px;top:4.00px;width:51.6px">0</span><span class="n" style="left:727.5px;top:4.00px;width:50.6px">0.0%</span><span class="n" style="left:783.5px;top:4.00px;width:50.6px">0.0%</span><span class="n" style="left:839.5px;top:4.00px;width:50.6px">0.0%</span><span class="n" style="left:895.5px;top:4.00px;width:51.6px">0.0%</span><span class="n" style="left:952.5px;top:4.00px;width:64.6px">1</span><span class="n" style="left:1022.5px;top:4.00px;width:70.6px">3.4%</span><span class="n" style="left:1098.5px;top:4.00px;width:71.6px">0</span></div>
<div class="row o" style="top:853px;height:22px"><span class="s2" style="left:4.7px;top:4.84px;width:105.5px">E-Electrical</span><span class="s12" style="left:117px;top:4.84px;width:203px">TR-Test Report</span><span class="n" style="left:318.5px;top:5.00px;width:82.6px">15</span><span class="n" style="left:406.5px;top:5.00px;width:88.6px">15</span><span class="n" style="left:500.5px;top:5.00px;width:52.1px">0</span><span class="n" style="left:558px;top:5.00px;width:51.1px">15</span><span class="n" style="left:614.5px;top:5.00px;width:50.6px">0</span><span class="n" style="left:670.5px;top:5.00px;width:51.6px">0</span><span class="n" style="left:727.5px;top:5.00px;width:50.6px">0.0%</span><span class="n" style="left:783.5px;top:5.00px;width:50.6px">100.0%</span><span class="n" style="left:839.5px;top:5.00px;width:50.6px">0.0%</span><span class="n" style="left:895.5px;top:5.00px;width:51.6px">0.0%</span><span class="n" style="left:952.5px;top:5.00px;width:64.6px">0</span><span class="n" style="left:1022.5px;top:5.00px;width:70.6px">0.0%</span><span class="n" style="left:1098.5px;top:5.00px;width:71.6px">0</span></div>
<div class="row" style="top:875px;height:21px"><span class="s3" style="left:4.7px;top:3.84px;width:105.5px">Environmental</span><span class="s7" style="left:117px;top:3.84px;width:203px">MAR-Material Approval Request</span><span class="n" style="left:318.5px;top:4.00px;width:82.6px">5</span><span class="n" style="left:406.5px;top:4.00px;width:88.6px">5</span><span class="n" style="left:500.5px;top:4.00px;width:52.1px">0</span><span class="n" style="left:558px;top:4.00px;width:51.1px">4</span><span class="n" style="left:614.5px;top:4.00px;width:50.6px">1</span><span class="n" style="left:670.5px;top:4.00px;width:51.6px">0</span><span class="n" style="left:727.5px;top:4.00px;width:50.6px">0.0%</span><span class="n" style="left:783.5px;top:4.00px;width:50.6px">80.0%</span><span class="n" style="left:839.5px;top:4.00px;width:50.6px">20.0%</span><span class="n" style="left:895.5px;top:4.00px;width:51.6px">0.0%</span><span class="n" style="left:952.5px;top:4.00px;width:64.6px">0</span><span class="n" style="left:1022.5px;top:4.00px;width:70.6px">0.0%</span><span class="n" style="left:1098.5px;top:4.00px;width:71.6px">0</span></div>
<div class="row" style="top:896px;height:19px;font-weight:700;color:#1a1a1a"><span class="" style="left:4.7px;top:1.84px;width:105.5px">Total</span><span class="n" style="left:318.5px;top:2.00px;width:82.6px">6779</span><span class="n" style="left:406.5px;top:2.00px;width:88.6px">6760</span><span class="n" style="left:500.5px;top:2.00px;width:52.1px">4748</span><span class="n" style="left:558px;top:2.00px;width:51.1px">1626</span><span class="n" style="left:614.5px;top:2.00px;width:50.6px">178</span><span class="n" style="left:670.5px;top:2.00px;width:51.6px">58</span><span class="n" style="left:952.5px;top:2.00px;width:64.6px">19</span><span class="n" style="left:1098.5px;top:2.00px;width:71.6px">18</span></div>
<div class="hl" style="top:335px;background:#a6d2ff"></div>
<div class="hl" style="top:382px"></div>
<div class="hl" style="top:403px"></div>
<div class="hl" style="top:425px"></div>
<div class="hl" style="top:446px"></div>
<div class="hl" style="top:468px"></div>
<div class="hl" style="top:489px"></div>
<div class="hl" style="top:510px"></div>
<div class="hl" style="top:532px"></div>
<div class="hl" style="top:553px"></div>
<div class="hl" style="top:575px"></div>
<div class="hl" style="top:596px"></div>
<div class="hl" style="top:618px"></div>
<div class="hl" style="top:639px"></div>
<div class="hl" style="top:660px"></div>
<div class="hl" style="top:682px"></div>
<div class="hl" style="top:703px"></div>
<div class="hl" style="top:725px"></div>
<div class="hl" style="top:746px"></div>
<div class="hl" style="top:768px"></div>
<div class="hl" style="top:789px"></div>
<div class="hl" style="top:810px"></div>
<div class="hl" style="top:832px"></div>
<div class="hl" style="top:853px"></div>
<div class="hl" style="top:875px"></div>
<div class="hl" style="top:914px;height:2px;background:#6aa3de"></div>
<div class="vl" style="left:743px;top:335px;height:580px"></div>
<div class="vl" style="left:951px;top:335px;height:580px"></div>
<div class="vl" style="left:1039px;top:335px;height:580px"></div>
<div class="vl" style="left:1133px;top:335px;height:580px"></div>
<div class="vl" style="left:1190.5px;top:335px;height:580px"></div>
<div class="vl" style="left:1247px;top:335px;height:580px"></div>
<div class="vl" style="left:1303px;top:335px;height:580px"></div>
<div class="vl" style="left:1360px;top:335px;height:580px"></div>
<div class="vl" style="left:1416px;top:335px;height:580px"></div>
<div class="vl" style="left:1472px;top:335px;height:580px"></div>
<div class="vl" style="left:1528px;top:335px;height:580px"></div>
<div class="vl" style="left:1585px;top:335px;height:580px"></div>
<div class="vl" style="left:1655px;top:335px;height:580px"></div>
<div class="vl" style="left:1731px;top:335px;height:580px"></div>
<div class="abs" style="left:1813px;top:336px;width:7px;height:579px;border-radius:3.5px;background:#f3f3f3"></div>
<div class="abs" style="left:1813px;top:337px;width:7px;height:293px;border-radius:3.5px;background:#a8a8a8"></div>
<div id="bstrip"><div class="abs" style="left:8px;top:0;width:78px;height:10px;background:#fafafa;border-left:1px solid #777;border-right:1px solid #c8c8c8"></div></div>
</body></html>
